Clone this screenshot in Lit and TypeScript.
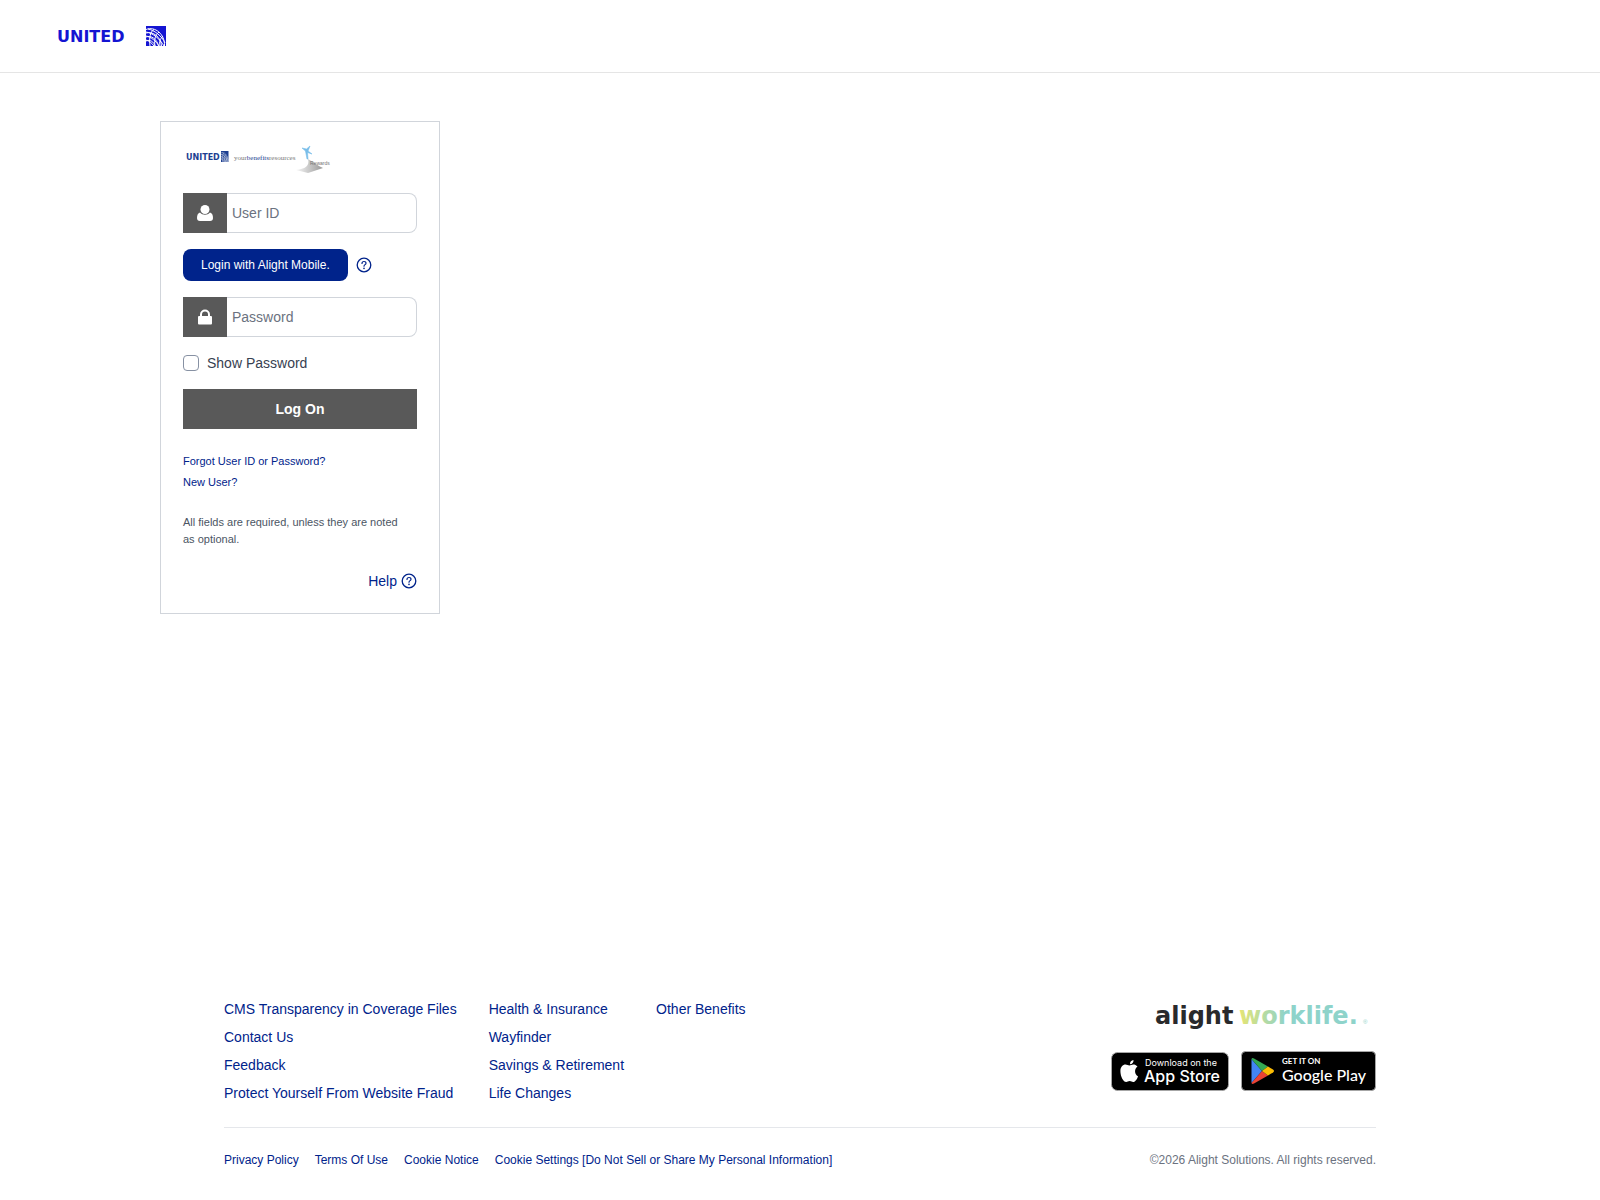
import { LitElement, html, css, svg } from "lit";
import { customElement, state } from "lit/decorators.js";

const footerColumns: string[][] = [
  ["CMS Transparency in Coverage Files", "Contact Us", "Feedback", "Protect Yourself From Website Fraud"],
  ["Health & Insurance", "Wayfinder", "Savings & Retirement", "Life Changes"],
  ["Other Benefits"],
];

const legalLinks = [
  "Privacy Policy",
  "Terms Of Use",
  "Cookie Notice",
  "Cookie Settings [Do Not Sell or Share My Personal Information]",
];

const globeLines = svg`
  <path d="M0 3.500C9 0 19 8 18.500 20M0 7C7 5 15 11 15.500 20M0 11C5 9 11 13 12.500 20M0 15C4 13 8 16 9 20"/>
  <path d="M2 3C8 4 16 10 19 17M0 6C7 7 14 13 18 20M0 10C5 11 10 15 13 20M0 14C3 15 6 17 8 20"/>
  <path d="M8 3.500C4 6 3 12 4 20M13 6C9 9 8 14 9 20M17 10C14 13 13 16 14 20"/>`;

const helpIcon = html`<svg class="help-icon" viewBox="0 0 16 16" aria-hidden="true">
  <circle cx="8" cy="8" r="6.800" fill="none" stroke="currentColor" stroke-width="1.300" />
  <path d="M6 6.400C6 5.200 6.900 4.500 8 4.500S10 5.200 10 6.300C10 7.600 8 7.700 8 9.200" fill="none" stroke="currentColor" stroke-width="1.200" stroke-linecap="round" />
  <circle cx="8" cy="11.400" r=".8" fill="currentColor" />
</svg>`;

@customElement("app-root")
export class AppRoot extends LitElement {
  @state() private showPassword = false;

  static styles = css`
    :host {
      display: flex;
      flex-direction: column;
      min-height: 100vh;
      background: #fff;
      color: #374151;
      font: 14px/20px "Liberation Sans", Arial, sans-serif;
    }
    * { box-sizing: border-box; }
    svg { display: block; flex: none; overflow: visible; }
    a { color: #00238b; text-decoration: none; }
    a:hover { text-decoration: underline; }
    header {
      display: flex;
      align-items: center;
      height: 73px;
      padding: 0 58px;
      border-bottom: 1px solid #e5e5e5;
    }
    .brand { width: 109px; height: 22px; }
    .brand text { font: bold 16px "DejaVu Sans", sans-serif; }
    main {
      flex: 1;
      width: 100%;
      max-width: 1280px;
      margin: 0 auto;
      padding-top: 48px;
    }
    .card {
      width: 280px;
      padding: 22px;
      border: 1px solid #d1d5db;
    }
    .partner { width: 148px; height: 33px; }
    .pw { font: bold 8px "DejaVu Sans", sans-serif; }
    .pb { font: 7px "Liberation Serif", serif; }
    .pr { font: 5px "Liberation Sans", sans-serif; }
    form { display: flex; flex-direction: column; gap: 16px; padding-top: 16px; }
    .field { display: flex; height: 40px; }
    .field label {
      display: grid;
      place-items: center;
      width: 44px;
      background: #595959;
      color: #fff;
    }
    .field input {
      flex: 1;
      min-width: 0;
      padding: 0 5px;
      border: 1px solid #d1d5db;
      border-left: 0;
      border-radius: 0 8px 8px 0;
      font: inherit;
      color: #374151;
    }
    .field input::placeholder { color: #6b7280; opacity: 1; }
    .mobile { display: flex; align-items: center; gap: 8px; }
    .mobile-login {
      height: 32px;
      padding: 0 18px;
      border: 0;
      border-radius: 8px;
      background: #00238b;
      color: #fff;
      font: 12px/16px "Liberation Sans", Arial, sans-serif;
    }
    .icon-button { padding: 0; border: 0; background: none; color: #00238b; }
    .help-icon { width: 16px; height: 16px; }
    .show { display: flex; align-items: center; gap: 8px; height: 20px; }
    .show input {
      appearance: none;
      width: 16px;
      height: 16px;
      margin: 0;
      border: 1px solid #8791a3;
      border-radius: 4px;
      background: #fff;
    }
    .show input:checked { background: #00238b; }
    .submit {
      height: 40px;
      border: 0;
      background: #595959;
      color: #fff;
      font: bold 14px/20px "Liberation Sans", Arial, sans-serif;
    }
    .account {
      display: flex;
      flex-direction: column;
      align-items: flex-start;
      gap: 4px;
      padding-top: 24px;
      font-size: 11px;
      line-height: 17px;
    }
    .note { margin: 0; padding: 23px 8px 0 0; font-size: 11px; line-height: 17px; color: #4b5563; }
    .help { display: flex; justify-content: flex-end; padding-top: 23px; }
    .help a { display: flex; align-items: center; gap: 4px; }
    footer {
      width: 100%;
      max-width: 1152px;
      margin: 0 auto;
      padding-bottom: 32px;
    }
    .top { display: flex; justify-content: space-between; padding-bottom: 24px; border-bottom: 1px solid #e5e7eb; }
    .columns { display: flex; gap: 32px; }
    ul { display: flex; flex-direction: column; gap: 8px; margin: 0; padding: 0; list-style: none; }
    .apps { display: flex; flex-direction: column; align-items: flex-end; gap: 14px; }
    .worklife { width: 220px; height: 38px; }
    .worklife text { font: bold 24px "DejaVu Sans", sans-serif; }
    .worklife .mark { font: 6px "Liberation Sans", sans-serif; }
    .badges { display: flex; align-items: center; gap: 12px; }
    .badge-small { font: 9px Inter, sans-serif; }
    .badge-tag { font: bold 8px Lato, sans-serif; }
    .badge-large { font: 500 16px Inter, sans-serif; }
    .play-large { font: 500 16px Lato, sans-serif; }
    .legal { display: flex; justify-content: space-between; padding-top: 24px; font-size: 12px; line-height: 16px; }
    .legal ul { flex-direction: row; gap: 16px; }
    .copyright { color: #6b7280; }
  `;

  private toggle(e: Event) {
    this.showPassword = (e.target as HTMLInputElement).checked;
  }

  render() {
    return html`
      <header>
        <svg class="brand" viewBox="0 0 109 22" role="img" aria-label="United" fill="#1414d2">
          <text x="-1" y="17">UNITED</text>
          <path d="M88 1h20v20H88z" />
          <svg x="88" y="1" width="20" height="20" viewBox="0 0 20 20" fill="none" stroke="#fff" stroke-width="1">${globeLines}</svg>
        </svg>
      </header>
      <main>
        <section class="card">
          <svg class="partner" viewBox="0 0 148 33" role="img" aria-label="United, your benefits resources, Rewards">
            <defs>
              <linearGradient id="path-fade"><stop stop-color="#f5f5f5" /><stop offset="1" stop-color="#999" /></linearGradient>
            </defs>
            <text class="pw" x="3" y="16" fill="#1d3f91">UNITED</text>
            <path d="M38 7h7.500v11H38z" fill="#1d3f91" />
            <svg x="38" y="7" width="7.500" height="11" viewBox="0 0 20 20" preserveAspectRatio="none" fill="none" stroke="#fff" stroke-width=".7">${globeLines}</svg>
            <text class="pb" x="51" y="16" fill="#777">your<tspan fill="#1d3f91">benefits</tspan>resources</text>
            <path d="M113 26C122 25 127 22 125 15C131 18 135 22 140 24L125 29Z" fill="url(#path-fade)" />
            <path d="M124 15L122.500 7L119 4L123.500 5L127 2L125 7L129 10L124.500 8.500L125 15Z" fill="#78bde9" stroke="#78bde9" stroke-width=".6" />
            <text class="pr" x="127" y="21" fill="#777">Rewards</text>
          </svg>
          <form @submit=${(e: Event) => e.preventDefault()}>
            <div class="field">
              <label for="user" aria-label="User ID">
                <svg width="16" height="16" viewBox="0 0 16 16" fill="currentColor">
                  <circle cx="8" cy="4.500" r="4.500" />
                  <path d="M3 7.500C1 8 0 10 0 13C0 15 1 16 3 16H13C15 16 16 15 16 13C16 10 15 8 13 7.500C10.500 10.500 5.500 10.500 3 7.500Z" />
                </svg>
              </label>
              <input id="user" type="text" placeholder="User ID" />
            </div>
            <div class="mobile">
              <button class="mobile-login" type="button">Login with Alight Mobile.</button>
              <button class="icon-button" type="button" aria-label="About Alight Mobile">${helpIcon}</button>
            </div>
            <div class="field">
              <label for="password" aria-label="Password">
                <svg width="14" height="16" viewBox="0 0 14 16" fill="currentColor">
                  <rect y="7" width="14" height="8.500" rx="1" />
                  <path d="M3 8V5.500a4 4 0 0 1 8 0V8" fill="none" stroke="currentColor" stroke-width="2" />
                </svg>
              </label>
              <input id="password" type=${this.showPassword ? "text" : "password"} placeholder="Password" />
            </div>
            <div class="show">
              <input id="show" type="checkbox" @change=${this.toggle} />
              <label for="show">Show Password</label>
            </div>
            <button class="submit" type="submit">Log On</button>
          </form>
          <div class="account">
            <a href="#forgot">Forgot User ID or Password?</a>
            <a href="#new">New User?</a>
          </div>
          <p class="note">All fields are required, unless they are noted as optional.</p>
          <div class="help"><a href="#help">Help ${helpIcon}</a></div>
        </section>
      </main>
      <footer>
        <div class="top">
          <nav class="columns" aria-label="Footer">
            ${footerColumns.map((c) => html`<ul>${c.map((t) => html`<li><a href="#">${t}</a></li>`)}</ul>`)}
          </nav>
          <div class="apps">
            <svg class="worklife" viewBox="0 0 220 38" role="img" aria-label="alight worklife">
              <defs>
                <linearGradient id="teal" gradientUnits="userSpaceOnUse" x1="83" x2="130" y1="0" y2="0">
                  <stop stop-color="#e5e574" /><stop offset="1" stop-color="#8ed3ca" />
                </linearGradient>
              </defs>
              <text x="-1" y="25" fill="#292a2c">alight</text>
              <text x="83" y="25" fill="url(#teal)">worklife.</text>
              <text class="mark" x="207" y="25" fill="#8ed3ca">®</text>
            </svg>
            <div class="badges">
              <a href="#ios" aria-label="Download on the App Store">
                <svg width="118" height="39" viewBox="0 0 118 39">
                  <rect x=".5" y=".5" width="117" height="38" rx="6" fill="#000" stroke="#a6a6a6" />
                  <path d="M22.500 8C20.500 8.200 18.700 10 19 12.300C21 12.300 22.800 10.300 22.500 8ZM26.500 14.500C25.300 13 23.700 12.400 22.300 12.400C20.600 12.400 19.600 13.400 18.400 13.400C17.100 13.400 16 12.400 14.500 12.400C11.800 12.400 9.400 14.900 9.400 18.900C9.400 24.600 12.500 30 15.200 30C16.500 30 17 29.100 18.700 29.100C20.400 29.100 20.800 30 22.200 30C24.400 30 26.300 26.600 27 24.200C23.300 22.500 23.100 16.700 26.500 14.500Z" fill="#fff" />
                  <text class="badge-small" x="34" y="14" fill="#fff">Download on the</text>
                  <text class="badge-large" x="33" y="30" fill="#fff">App Store</text>
                </svg>
              </a>
              <a href="#android" aria-label="Get it on Google Play">
                <svg width="135" height="40" viewBox="0 0 135 40">
                  <rect x=".5" y=".5" width="134" height="39" rx="4" fill="#000" stroke="#a6a6a6" />
                  <path d="M10.500 8V32L21 20Z" fill="#4285f4" />
                  <path d="M10.500 8Q11 6.500 13 7.500L27 15.500L21 20Z" fill="#34a853" />
                  <path d="M10.500 32Q11 33.500 13 32.500L27 24.500L21 20Z" fill="#ea4335" />
                  <path d="M27 15.500L32 18.500Q34 20 32 21.500L27 24.500L21 20Z" fill="#fbbc04" />
                  <text class="badge-tag" x="41" y="13" fill="#fff">GET IT ON</text>
                  <text class="play-large" x="41" y="30" fill="#fff">Google Play</text>
                </svg>
              </a>
            </div>
          </div>
        </div>
        <div class="legal">
          <ul>${legalLinks.map((t) => html`<li><a href="#">${t}</a></li>`)}</ul>
          <span class="copyright">©2026 Alight Solutions. All rights reserved.</span>
        </div>
      </footer>
    `;
  }
}
